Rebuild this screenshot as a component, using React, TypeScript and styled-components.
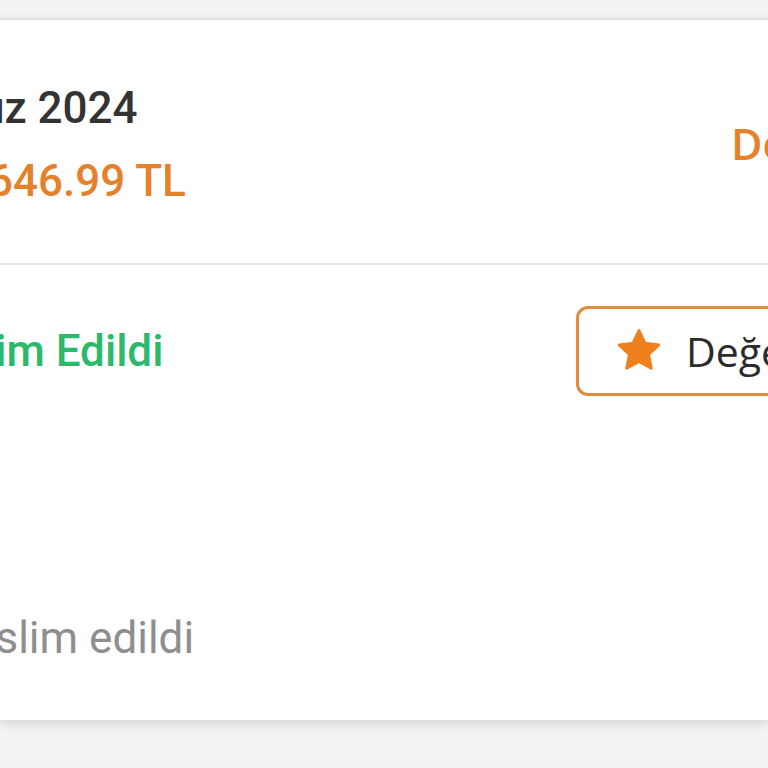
import React from "react";
import styled, { createGlobalStyle } from "styled-components";

const Global = createGlobalStyle`
  html, body { margin: 0; padding: 0; background: #f3f3f3; }
  body { width: 768px; height: 768px; overflow: hidden; font-family: Roboto, "Liberation Sans", sans-serif; }
`;

const Screen = styled.div`
  width: 768px;
  height: 768px;
  overflow: hidden;
  background: #f3f3f3;
  padding-top: 18px;
  box-sizing: border-box;
`;

const Card = styled.div`
  background: #fff;
  border-top: 2px solid #e2e2e2;
  box-shadow: 0 4px 10px rgba(0, 0, 0, 0.12);
  height: 700px;
  display: flex;
  flex-direction: column;
`;

const Header = styled.div`
  height: 245px;
  box-sizing: border-box;
  padding-top: 62px;
  border-bottom: 2px solid #e6e6e6;
  display: flex;
  justify-content: space-between;
  align-items: flex-start;
`;

const Body = styled.div`
  flex: 1;
  padding-top: 41px;
  display: flex;
  flex-direction: column;
`;

const Col = styled.div`
  display: flex;
  flex-direction: column;
  gap: 21px;
`;

const Line = styled.div<{ $color: string; $weight: number; $shift: number }>`
  font-size: 44px;
  line-height: 52px;
  font-weight: ${(p) => p.$weight};
  color: ${(p) => p.$color};
  margin-left: -${(p) => p.$shift}px;
  white-space: nowrap;
`;

const Link = styled.div`
  font-family: "Open Sans", "Noto Sans", sans-serif;
  font-size: 43px;
  line-height: 52px;
  font-weight: 600;
  color: #e6822b;
  white-space: nowrap;
  margin-top: 36px;
  width: 37px;
`;

const Row = styled.div`
  display: flex;
  align-items: center;
  justify-content: space-between;
  width: 100%;
`;

const RateButton = styled.div`
  box-sizing: border-box;
  height: 90px;
  width: 300px;
  margin-right: -108px;
  border: 3px solid #e28a3e;
  border-radius: 12px;
  display: flex;
  align-items: center;
  padding-left: 35px;
  gap: 22px;
  flex-shrink: 0;
  font-family: "Open Sans", "Noto Sans", sans-serif;
  font-size: 41px;
  font-weight: 500;
  color: #2b2b2b;
  white-space: nowrap;
  overflow: hidden;
`;

const Star = styled.svg`
  flex-shrink: 0;
  width: 50px;
  height: 50px;
`;

const Note = styled.div`
  margin-top: 216px;
`;

export default function App() {
  return (
    <>
      <Global />
      <Screen>
        <Card>
          <Header>
            <Col>
              <Line $color="#333333" $weight={500} $shift={205}>12 Temmuz 2024</Line>
              <Line $color="#e4812b" $weight={500} $shift={37}>1646.99 TL</Line>
            </Col>
            <Link>Detay</Link>
          </Header>
          <Body>
            <Row>
              <Line $color="#2cb96b" $weight={500} $shift={87}>Teslim Edildi</Line>
              <RateButton>
                <Star viewBox="0 0 24 24">
                  <path
                    d="M12 2.2l2.9 6.1 6.6.8-4.9 4.6 1.3 6.6L12 17l-5.9 3.3 1.3-6.6L2.5 9.1l6.6-.8z"
                    fill="#f07f1e"
                    stroke="#f07f1e"
                    strokeWidth="1.4"
                    strokeLinejoin="round"
                  />
                </Star>
                Değerlendir
              </RateButton>
            </Row>
            <Note>
              <Line $color="#8e8e8e" $weight={400} $shift={52}>Teslim edildi</Line>
            </Note>
          </Body>
        </Card>
      </Screen>
    </>
  );
}
